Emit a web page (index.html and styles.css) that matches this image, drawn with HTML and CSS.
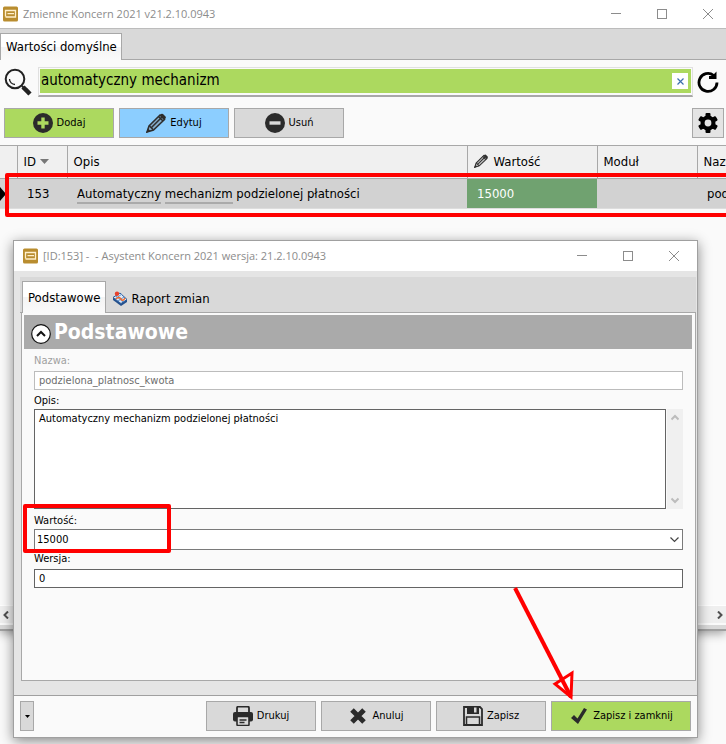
FILE: index.html
```html
<!DOCTYPE html>
<html lang="pl">
<head>
<meta charset="utf-8">
<title>Zmienne Koncern 2021</title>
<link rel="stylesheet" href="styles.css">
</head>
<body>
<svg class="defs" aria-hidden="true">
  <symbol id="app" viewBox="0 0 16 16"><rect width="15" height="15" y="0.5" rx="1.500" fill="#b98d2f"/><path d="M2.500 10.500V4.500H12.500V11H2.500M4.500 7.700H11" fill="none" stroke="#fff0cc" stroke-width="1.300"/></symbol>
  <symbol id="min" viewBox="0 0 11 11"><path d="M0 4.500h10" stroke="#8c8c8c"/></symbol>
  <symbol id="max" viewBox="0 0 11 11"><rect x=".5" y=".5" width="9" height="9" fill="none" stroke="#8c8c8c"/></symbol>
  <symbol id="close" viewBox="0 0 11 11"><path d="M0 0l10 10M10 0l-10 10" stroke="#8c8c8c"/></symbol>
  <symbol id="pencil" viewBox="0 0 20 20"><path d="M1 19l2-6L14 2l4.500 4.500L7.500 17z" fill="#777" fill-opacity=".4" stroke="#2d2d2d" stroke-width="1.500"/><path d="M3.500 13l3.800 3.800M5 15L16 4M12.500 3.500L17 8" stroke="#2d2d2d" stroke-width="1.500" fill="none"/><path d="M14 2q1.500-2 3-1l2.500 2.500q1 1.500-1 3z" fill="#2d2d2d"/><path d="M0 20l2-4.500 2.500 2.500z" fill="#2d2d2d"/></symbol>
</svg>

<main class="window">
  <header class="titlebar">
    <svg class="app-icon"><use href="#app"/></svg>
    <h1>Zmienne Koncern 2021 v21.2.10.0943</h1>
    <div class="controls">
      <button aria-label="Minimalizuj"><svg><use href="#min"/></svg></button>
      <button aria-label="Maksymalizuj"><svg><use href="#max"/></svg></button>
      <button aria-label="Zamknij"><svg><use href="#close"/></svg></button>
    </div>
  </header>
  <nav class="tabs"><button class="tab active">Wartości domyślne</button></nav>

  <div class="search">
    <svg class="lens" viewBox="0 0 28 28"><circle cx="11" cy="11" r="9.300" fill="none" stroke="#222" stroke-width="2"/><path d="M5.500 11a5.500 5.500 0 0 0 5.500 5.500" fill="none" stroke="#222" stroke-width="1.300"/><path d="M18 18l2.500 2.500" stroke="#222" stroke-width="2"/><path d="M19 19l7 7" stroke="#222" stroke-width="4.500"/></svg>
    <div class="search-box">
      <input type="text" aria-label="Szukaj" value="automatyczny mechanizm">
      <button class="clear" aria-label="Wyczyść"><svg viewBox="0 0 7 7"><path d="M.5.5l6 6M6.500.5l-6 6" stroke="#3c6fae" stroke-width="1.200"/></svg></button>
    </div>
    <button class="refresh" aria-label="Odśwież"><svg viewBox="0 0 22 22"><path d="M16.500 4.300A9 9 0 1 0 20 11.500" fill="none" stroke="#000" stroke-width="2.800"/><path d="M19.500 .5v7.500h-7.500v-3h3z" fill="#000"/></svg></button>
  </div>

  <div class="toolbar">
    <button class="btn green"><svg viewBox="0 0 20 20"><circle cx="10" cy="10" r="10" fill="#2b2b2b"/><path d="M10 4.500v11M4.500 10h11" stroke="#acd95f" stroke-width="3.400"/></svg>Dodaj</button>
    <button class="btn blue"><svg><use href="#pencil"/></svg>Edytuj</button>
    <button class="btn"><svg viewBox="0 0 20 20"><circle cx="10" cy="10" r="10" fill="#2b2b2b"/><path d="M4.500 10h11" stroke="#d9d9d9" stroke-width="3.400"/></svg>Usuń</button>
    <button class="btn gear" aria-label="Ustawienia"><svg viewBox="0 0 20 20"><g fill="#000"><circle cx="10" cy="10" r="7.500"/><g id="tooth"><rect x="7.500" y="0" width="5" height="20" rx="1"/></g><use href="#tooth" transform="rotate(60 10 10)"/><use href="#tooth" transform="rotate(120 10 10)"/></g><circle cx="10" cy="10" r="3.400" fill="#e4e4e4"/></svg></button>
  </div>

  <div class="grid">
    <table>
      <colgroup><col class="c-mark"><col class="c-id"><col class="c-desc"><col class="c-value"><col class="c-module"><col class="c-name"></colgroup>
      <thead><tr><th></th><th>ID <svg class="sort" viewBox="0 0 9 5"><path d="M0 0h9L4.500 5z" fill="#777"/></svg></th><th>Opis</th><th class="edit"><svg class="pen"><use href="#pencil"/></svg>Wartość</th><th>Moduł</th><th>Nazwa</th></tr></thead>
      <tbody><tr><td class="mark"><svg viewBox="0 0 6 14"><path d="M0 0l6 7-6 7z"/></svg></td><td>153</td><td><span class="hit">Automatyczny</span> <span class="hit">mechanizm</span> podzielonej płatności</td><td class="value">15000</td><td></td><td>podzielona_platnosc_kwota</td></tr></tbody>
    </table>
  </div>
  <div class="hscroll">
    <button aria-label="W lewo"><svg viewBox="0 0 6 8"><path d="M5 .5L1.500 4 5 7.500" fill="none" stroke="#505050" stroke-width="2"/></svg></button>
    <button aria-label="W prawo"><svg viewBox="0 0 6 8"><path d="M1 .5L4.500 4 1 7.500" fill="none" stroke="#505050" stroke-width="2"/></svg></button>
  </div>
</main>

<section class="dialog" role="dialog" aria-labelledby="dialog-title">
  <header class="titlebar">
    <svg class="app-icon"><use href="#app"/></svg>
    <h2 id="dialog-title">[ID:153] -&nbsp; - Asystent Koncern 2021 wersja: 21.2.10.0943</h2>
    <div class="controls">
      <button aria-label="Minimalizuj"><svg><use href="#min"/></svg></button>
      <button aria-label="Maksymalizuj"><svg><use href="#max"/></svg></button>
      <button aria-label="Zamknij"><svg><use href="#close"/></svg></button>
    </div>
  </header>
  <div class="body">
    <nav class="tabs">
      <button class="tab active">Podstawowe</button>
      <button class="tab"><svg viewBox="0 0 16 16"><path d="M1 6.500L8 2l7 6.500v2.500L9 15 1 9z" fill="#24508c"/><path d="M1 6.500L8 2l7 6.500L9 12.500z" fill="#dfeaf8" stroke="#2c5d9c"/><path d="M4 5l7 6M3 8l7-5M6 10l6-4" stroke="#5f92cc"/><path d="M4 8q3-3 5 0t4-1" stroke="#f06a2a" stroke-width="1.500" fill="none"/><circle cx="5" cy="2.800" r="2.200" fill="#e8412c"/></svg>Raport zmian</button>
    </nav>
    <form class="panel">
      <div class="section"><svg viewBox="0 0 20 20"><circle cx="10" cy="10" r="9.300" fill="#fff" stroke="#111" stroke-width="1.200"/><path d="M6 12l4-4 4 4" fill="none" stroke="#111" stroke-width="2"/></svg><h3>Podstawowe</h3></div>
      <div class="fields">
        <label class="muted roomy" for="name">Nazwa:</label>
        <input id="name" class="muted" type="text" value="podzielona_platnosc_kwota" readonly>
        <label for="desc">Opis:</label>
        <div class="area">
          <textarea id="desc">Automatyczny mechanizm podzielonej płatności</textarea>
          <div class="vscroll"><svg viewBox="0 0 8 7"><path d="M.5 5.500L4 2l3.500 3.500" fill="none" stroke="#bcbcbc" stroke-width="2"/></svg><svg viewBox="0 0 8 7"><path d="M.5 1.500L4 5l3.500-3.500" fill="none" stroke="#bcbcbc" stroke-width="2"/></svg></div>
        </div>
        <label for="value">Wartość:</label>
        <div class="combo"><select id="value"><option>15000</option></select><svg viewBox="0 0 9 6"><path d="M.5.5l4 4 4-4" fill="none" stroke="#444" stroke-width="1.200"/></svg></div>
        <label class="roomy" for="version">Wersja:</label>
        <input id="version" type="text" value="0">
      </div>
    </form>
  </div>
  <footer class="actions">
    <button class="btn more" aria-label="Więcej"><svg viewBox="0 0 5 3"><path d="M0 0h5L2.500 3z"/></svg></button>
    <button class="btn"><svg viewBox="0 0 20 20"><path d="M4 7V2q0-1.500 1.500-1.500h9q1.500 0 1.500 1.500v5" fill="none" stroke="#2b2b2b" stroke-width="1.800"/><rect y="6" width="20" height="9.500" rx="2" fill="#2b2b2b"/><rect x="4" y="10.500" width="12" height="9" rx="1" fill="#d9d9d9" stroke="#2b2b2b" stroke-width="1.600"/><path d="M6.500 14h7M6.500 16.500h5" stroke="#2b2b2b" stroke-width="1.300"/></svg>Drukuj</button>
    <button class="btn"><svg viewBox="0 0 20 20"><path d="M4 4l12 12M16 4L4 16" stroke="#2b2b2b" stroke-width="5"/></svg>Anuluj</button>
    <button class="btn"><svg viewBox="0 0 20 20"><path d="M1 1h16l2 2v16H1z" fill="#d9d9d9" stroke="#2b2b2b" stroke-width="1.800"/><path d="M4 0h12v8H4z" fill="#2b2b2b"/><path d="M11 1.500h2.500v5H11z" fill="#d9d9d9"/><path d="M3.500 19v-8h13v8" fill="none" stroke="#2b2b2b" stroke-width="1.500"/></svg>Zapisz</button>
    <button class="btn green wide"><svg viewBox="0 0 20 20"><path d="M2 12l3-3 3.500 3.500L15 2l3 1.500L9 18z" fill="#2b2b2b"/></svg>Zapisz i zamknij</button>
  </footer>
</section>

<div class="frame frame-row"></div>
<div class="frame frame-value"></div>
<svg class="arrow" viewBox="0 0 64 114"><path d="M43 98L60 87 59 111z" fill="#fff" fill-opacity=".9" stroke="#f00" stroke-width="3"/><path d="M3 2L59 111" stroke="#f00" stroke-width="4"/></svg>
</body>
</html>
```

FILE: styles.css
```css
* { box-sizing: border-box; }
:root {
  --ui: "DejaVu Sans Condensed", "Noto Sans", sans-serif;
  --line: #a8a8a8;
  --green: #acd95f;
}
body { margin: 0; min-height: 100vh; overflow: hidden; position: relative; background: #fafafa; font: 11px/16px var(--ui); color: #000; }
button, input, select, textarea { font: inherit; color: inherit; margin: 0; }
button { border: 0; padding: 0; background: none; }
h1, h2, h3 { margin: 0; }
.defs { position: absolute; width: 0; height: 0; }

.window { height: 631px; display: flex; flex-direction: column; background: #fafafa; border-bottom: 2px solid #a0a0a0; box-shadow: 0 2px 10px #0006; }
.titlebar { display: flex; align-items: center; background: #fff; height: 28px; padding-left: 3px; flex: none; }
.titlebar h1, .titlebar h2 { font: 11px/16px "Open Sans", sans-serif; color: #8c8c8c; margin-left: 4px; white-space: nowrap; }
.app-icon { width: 16px; height: 16px; }
.controls { display: flex; margin-left: auto; }
.controls button { width: 46px; height: 24px; display: grid; place-items: center; }
.controls svg { width: 11px; height: 11px; }
.window .controls { margin-right: -5px; }

.tabs { display: flex; align-items: flex-end; background: #d9d9d9; border-bottom: 1px solid var(--line); flex: none; }
.window .tabs { height: 32px; border-top: 1px solid #bcbcbc; }
.tab { display: flex; align-items: center; gap: 4px; padding: 0 6px; height: 26px; font-size: 13px; white-space: nowrap; }
.tab svg { width: 16px; height: 16px; }
.tab.active { background: linear-gradient(#fff 50%, #f4f4f4 50%, #fafafa); border: 1px solid var(--line); border-bottom: 0; margin-bottom: -1px; height: 27px; padding: 0 4px 0 5px; }

.search { display: flex; align-items: center; padding: 7px 7px 0 4px; }
.lens { width: 28px; height: 28px; margin-right: 6px; }
.search-box { flex: 1; display: flex; align-items: center; height: 30px; padding: 1px 1px 2px; border: 1px solid #e0e0e0; border-bottom: 2px solid var(--line); }
.search-box input { flex: 1; min-width: 0; height: 24px; border: 0; background: var(--green); padding: 0 1px 2px; font-size: 15px; }
.clear { width: 16px; height: 16px; background: #fff; margin: 0 3px 0 -19px; display: grid; place-items: center; }
.clear svg { width: 7px; height: 7px; }
.refresh { margin-left: 4px; width: 22px; height: 22px; }
.refresh svg { width: 22px; height: 22px; }

.toolbar { display: flex; gap: 5px; padding: 11px 2px 7px 4px; }
.btn { display: flex; align-items: center; justify-content: center; gap: 4px; width: 110px; height: 30px; border: 1px solid var(--line); background: #d9d9d9; white-space: nowrap; }
.btn svg { width: 20px; height: 20px; }
.btn.green { background: var(--green); }
.btn.blue { background: #8cceff; }
.btn.gear { width: 32px; margin-left: auto; background: #e4e4e4; }

.grid { flex: 1; overflow: hidden; }
table { width: 797px; border-collapse: collapse; table-layout: fixed; font-size: 13px; text-align: left; }
.c-mark { width: 17px; } .c-id { width: 50px; } .c-desc { width: 400px; } .c-value { width: 130px; } .c-module { width: 100px; } .c-name { width: 100px; }
th { height: 33px; padding: 0 6px; border: 1px solid var(--line); border-left: 0; background: #f0f0f0; font-weight: normal; }
td { height: 30px; padding: 0 10px; background: #d2d2d2; border-bottom: 1px solid #ddd; white-space: nowrap; }
td.mark { padding: 0; }
.mark svg { width: 6px; height: 14px; display: block; }
.sort { width: 9px; height: 5px; margin-bottom: 2px; }
.pen { width: 14px; height: 14px; margin-right: 6px; vertical-align: -2px; }
.hit { border-bottom: 2px solid #aaa; padding-bottom: 1px; }
td.value { background: #70a270; color: #fff; }

.hscroll { display: flex; justify-content: space-between; align-items: center; height: 24px; padding: 0 3px 6px; background: linear-gradient(#efefef 17px, #fafafa 17px 19px, #d9d9d9 19px); border-top: 1px solid #fff; }
.hscroll svg { width: 6px; height: 8px; display: block; }

.dialog { position: absolute; left: 13px; right: 28px; top: 240px; background: #e5e5e5; border: 1px solid #a0a0a0; box-shadow: 0 3px 12px #0007; }
.dialog .titlebar { height: 30px; padding-left: 9px; }
.body { padding: 6px 1px 14px 6px; }
.dialog .tabs { height: 36px; padding-left: 2px; }
.dialog .tab { height: 27px; }
.dialog .tab.active { height: 32px; }
.panel { margin-left: 1px; height: 368px; background: #fafafa; border: 1px solid var(--line); border-top: 0; padding: 2px 3px 0 2px; }
.section { display: flex; align-items: center; height: 34px; padding-left: 7px; gap: 3px; background: #aaa; color: #fff; }
.section svg { width: 20px; height: 20px; margin-top: 4px; }
.section h3 { font-size: 21px; line-height: 30px; }
.fields { display: flex; flex-direction: column; padding: 4px 9px 0 10px; }
.fields label { height: 16px; }
.fields label.roomy { height: 18px; }
.fields input { height: 19px; margin-bottom: 3px; border: 1px solid #646464; background: #fff; padding: 0 4px; }
.fields label.muted { color: #a0a0a0; }
.fields input.muted { color: #6d6d6d; border-color: #bcbcbc; }
.area { display: flex; gap: 1px; height: 100px; margin-bottom: 4px; }
.area textarea { flex: 1; resize: none; border: 1px solid #646464; padding: 1px 4px; overflow: hidden; outline: 0; }
.vscroll { width: 16px; background: #f0f0f0; display: flex; flex-direction: column; justify-content: space-between; align-items: center; padding: 5px 0; }
.vscroll svg { width: 8px; height: 7px; }
.combo { display: grid; align-items: center; margin-bottom: 1px; }
.combo > * { grid-area: 1 / 1; }
.combo select { appearance: none; height: 21px; border: 1px solid #7a7a7a; border-radius: 0; background: #fff; padding: 0 2px; }
.combo svg { width: 9px; height: 6px; justify-self: end; margin-right: 4px; pointer-events: none; }

.actions { display: flex; gap: 5px; padding: 5px 6px 6px; background: #fafafa; border-top: 1px solid #a0a0a0; }
.btn.more { width: 14px; margin-right: auto; }
.btn.more svg { width: 5px; height: 3px; }
.btn.wide { width: 140px; }

.frame { position: absolute; border: 4px solid #f00; border-radius: 2px; }
.frame-row { left: 5px; right: -8px; top: 173px; height: 44px; }
.frame-value { left: 23px; top: 504px; width: 148px; height: 49px; }
.arrow { position: absolute; left: 512px; top: 586px; width: 64px; height: 114px; }
```
